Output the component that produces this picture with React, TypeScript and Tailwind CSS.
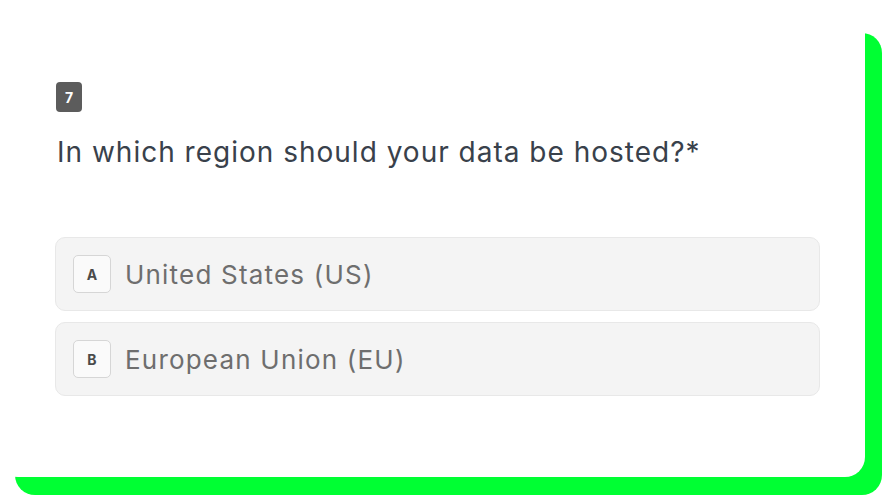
import React from "react";

const options = [
  { key: "A", label: "United States (US)" },
  { key: "B", label: "European Union (EU)" },
];

export default function App() {
  return (
    <div className="relative w-[883px] h-[496px] overflow-hidden bg-white" style={{ fontFamily: "Inter, 'Noto Sans', sans-serif" }}>
      <div className="absolute left-[15px] top-[33px] w-[867px] h-[462px] rounded-[20px] bg-[#00ff33]" />
      <div className="relative ml-[-2px] w-[867px] h-[477px] rounded-[20px] bg-white pt-[82px] pl-[58px] pr-[45px]">
        <div className="flex h-[30px] w-[26px] items-center justify-center rounded-[4px] bg-[#5c5c5c] text-[14px] font-bold text-white">
          7
        </div>
        <div className="mt-[22px] ml-[1px] text-[28px] leading-[36px] text-[#39414b] tracking-[1px]">
          In which region should your data be hosted?*
        </div>
        <div className="mt-[67px] ml-[-1px] flex flex-col gap-[11px]">
          {options.map((o) => (
            <div
              key={o.key}
              className="flex h-[74px] items-center rounded-[10px] border border-[#e8e8e8] bg-[#f4f4f4] pl-[17px]"
            >
              <div className="flex h-[38px] w-[38px] items-center justify-center rounded-[5px] border border-[#d6d6d6] bg-[#fafafa] text-[14px] font-bold text-[#4a4a4a]">
                {o.key}
              </div>
              <div className="ml-[14px] text-[26px] tracking-[1.2px] text-[#6e6e6e]">{o.label}</div>
            </div>
          ))}
        </div>
      </div>
    </div>
  );
}
